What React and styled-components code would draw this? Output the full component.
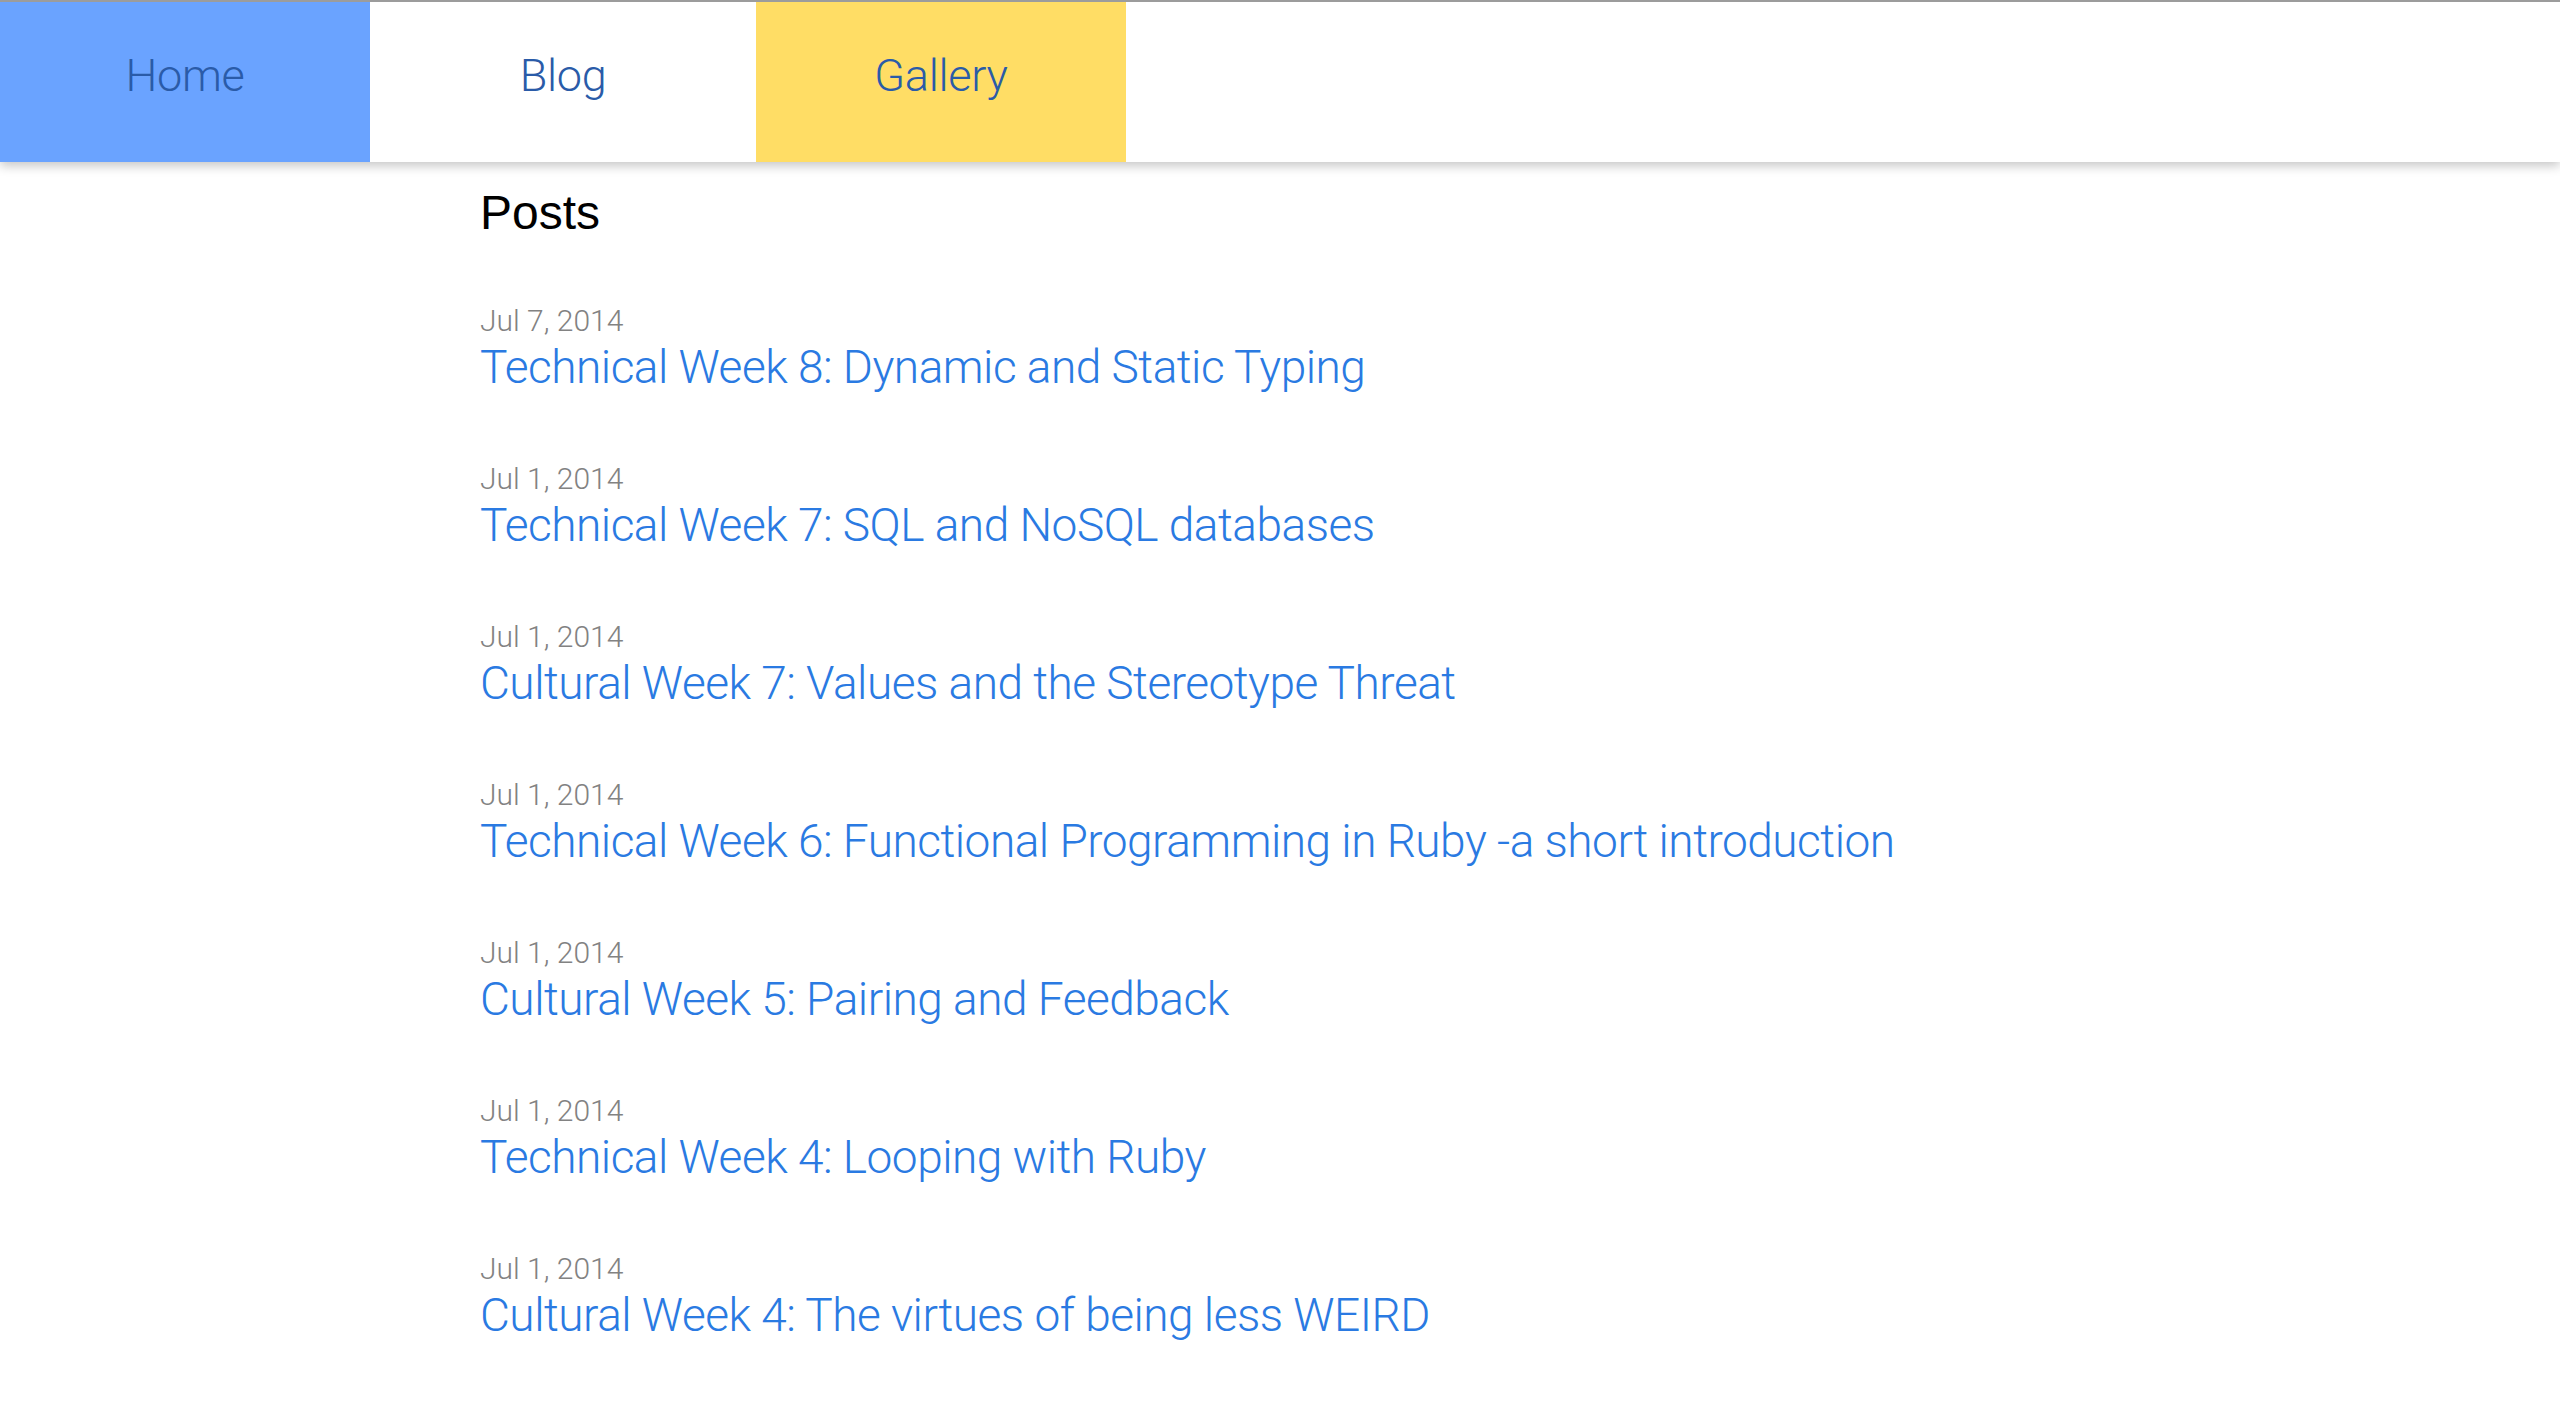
import React from "react";
import styled, { createGlobalStyle } from "styled-components";

const GlobalStyle = createGlobalStyle`
  html, body {
    margin: 0;
    padding: 0;
    background: #ffffff;
  }
  body {
    font-family: Roboto, "Liberation Sans", Arial, sans-serif;
  }
  * { box-sizing: border-box; }
`;

const Nav = styled.nav`
  display: flex;
  height: 162px;
  border-top: 2px solid #9c9c9c;
  background: #ffffff;
  box-shadow: 0 4px 10px rgba(0, 0, 0, 0.22);
  position: relative;
  z-index: 1;
`;

const NavItem = styled.a`
  display: block;
  width: ${(p) => p.$w}px;
  height: 100%;
  background: ${(p) => p.$bg || "transparent"};
  color: #2a5ba8;
  font-family: Roboto, "Liberation Sans", sans-serif;
  font-weight: 300;
  font-size: 45px;
  letter-spacing: -0.3px;
  line-height: 60px;
  padding-top: 44px;
  text-align: center;
  text-decoration: none;
`;

const Main = styled.main`
  width: 1600px;
  margin: 0 auto;
  padding-top: 23px;
`;

const Heading = styled.h2`
  margin: 0;
  font-family: "Liberation Sans", Arial, sans-serif;
  font-weight: 400;
  font-size: 48px;
  line-height: 56px;
  color: #000000;
`;

const PostList = styled.ul`
  list-style: none;
  margin: 62px 0 0 0;
  padding: 0;
  display: flex;
  flex-direction: column;
  gap: 66px;
`;

const PostItem = styled.li`
  display: flex;
  flex-direction: column;
  align-items: flex-start;
`;

const PostDate = styled.span`
  font-family: Roboto, "Liberation Sans", sans-serif;
  font-weight: 300;
  font-size: 30px;
  line-height: 36px;
  color: #828282;
`;

const PostLink = styled.a`
  font-family: Roboto, "Liberation Sans", sans-serif;
  font-weight: 300;
  font-size: 46px;
  letter-spacing: -0.5px;
  line-height: 56px;
  color: #2a7ae2;
  text-decoration: none;
`;

const navItems = [
  { label: "Home", w: 370, bg: "#6aa3ff" },
  { label: "Blog", w: 386, bg: "#ffffff" },
  { label: "Gallery", w: 370, bg: "#ffdd65" },
];

const posts = [
  { date: "Jul 7, 2014", title: "Technical Week 8: Dynamic and Static Typing" },
  { date: "Jul 1, 2014", title: "Technical Week 7: SQL and NoSQL databases" },
  { date: "Jul 1, 2014", title: "Cultural Week 7: Values and the Stereotype Threat" },
  { date: "Jul 1, 2014", title: "Technical Week 6: Functional Programming in Ruby -a short introduction" },
  { date: "Jul 1, 2014", title: "Cultural Week 5: Pairing and Feedback" },
  { date: "Jul 1, 2014", title: "Technical Week 4: Looping with Ruby" },
  { date: "Jul 1, 2014", title: "Cultural Week 4: The virtues of being less WEIRD" },
];

export default function App() {
  return (
    <>
      <GlobalStyle />
      <Nav>
        {navItems.map((n) => (
          <NavItem key={n.label} href="#" $w={n.w} $bg={n.bg}>
            {n.label}
          </NavItem>
        ))}
      </Nav>
      <Main>
        <Heading>Posts</Heading>
        <PostList>
          {posts.map((p, i) => (
            <PostItem key={i}>
              <PostDate>{p.date}</PostDate>
              <PostLink href="#">{p.title}</PostLink>
            </PostItem>
          ))}
        </PostList>
      </Main>
    </>
  );
}
